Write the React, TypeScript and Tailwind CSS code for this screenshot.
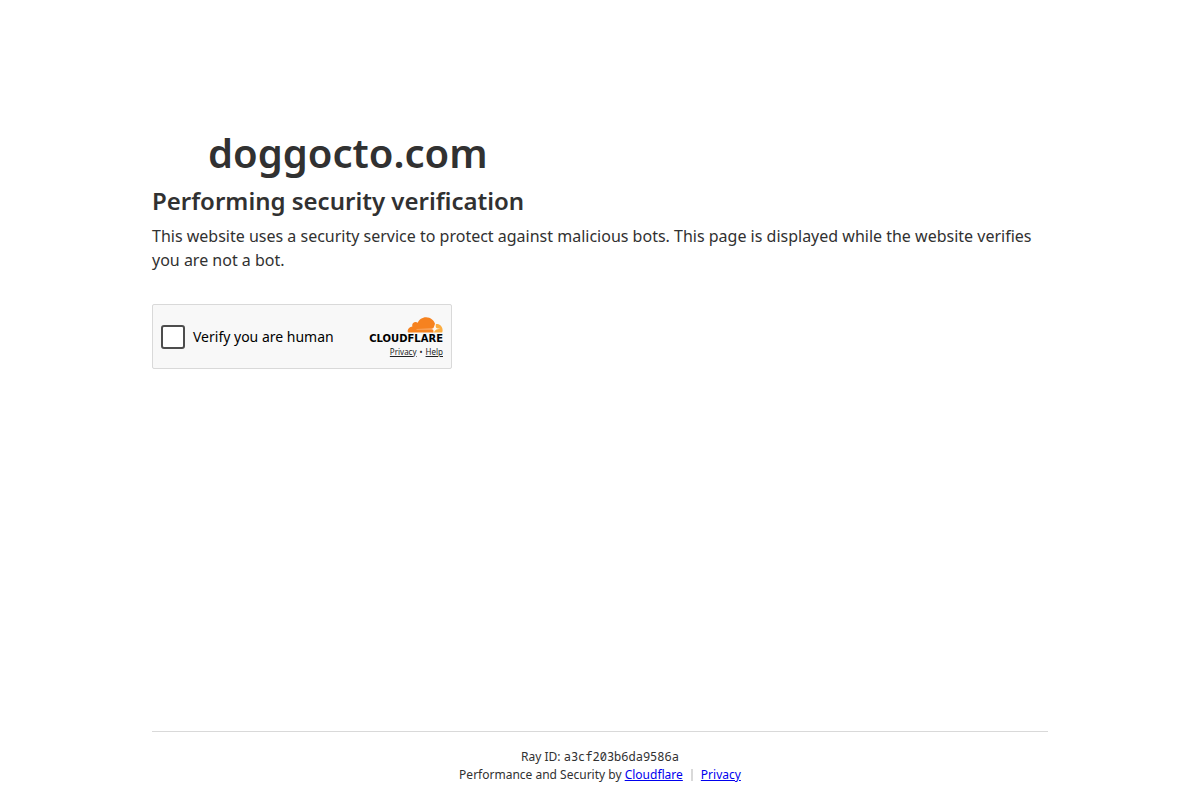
function CloudMark() {
  return (
    <svg className="h-4 w-9" viewBox="0 0 36 16" aria-hidden="true">
      <path
        fill="#fbad41"
        d="M28.8 7.100c.3-.1.6-.1.900-.1 3.300 0 5.900 2.700 5.900 6 0 .9-.1 1.600-.3 2.300-.1.200-.2.300-.4.300H25.300l1.700-3.600z"
      />
      <path
        fill="#f6821f"
        d="M1.200 15.600c-.3 0-.4-.2-.4-.5 0-.2-.1-.5-.1-.8 0-2.600 2.100-4.700 4.700-4.800-.1-.4-.2-.8-.2-1.200 0-1.900 1.500-3.400 3.400-3.400.8 0 1.600.3 2.200.8C12.100 2.600 15.300.3 19 .3c4.600 0 8.500 3.300 9.300 7.600l-1.500 4.200c-.1 1.100-.1 2-.5 3.200-.1.2-.2.3-.4.3z"
      />
      <path
        fill="#fff"
        fillOpacity="0.9"
        d="M9.500 11.900l15-.2c1.200-.1 2-.7 2.400-1.700l1-3 .7 0 .2 2.700c.2 1 .9 1.500 2 1.700l2.400.4-2.600.4c-1.700.3-2.900 1.200-3.400 2.800l-.2.600h-.6l.1-1.300c.1-1.200-.6-1.900-1.900-2l-15.100-.1z"
      />
    </svg>
  );
}

export default function App() {
  return (
    <div className="flex min-h-screen flex-col bg-white font-['Noto_Sans',sans-serif] text-[#313131]">
      <main className="mx-auto w-full max-w-[960px] grow px-8 pt-[123px]">
        <h1 className="pl-14 text-[40px] leading-[60px] font-semibold">doggocto.com</h1>
        <h2 className="text-2xl leading-9 font-semibold">Performing security verification</h2>
        <p className="mt-[5px] text-base leading-6">
          This website uses a security service to protect against malicious bots. This page is
          displayed while the website verifies you are not a bot.
        </p>
        <div className="mt-8 flex h-[65px] w-[300px] items-center justify-between rounded-[2px] border border-[#d9d9d9] bg-[#f8f8f8] px-2 text-black">
          <label className="flex items-center gap-2 text-sm">
            <input
              type="checkbox"
              className="size-6 appearance-none rounded-[3px] border-2 border-[#4d4d4d] bg-white"
            />
            Verify you are human
          </label>
          <div className="flex flex-col items-end pt-[2px]">
            <CloudMark />
            <span className="font-['DejaVu_Sans',sans-serif] text-[10px] leading-3 font-bold">
              CLOUDFLARE
            </span>
            <div className="flex items-center gap-[3px] text-[8px] leading-[14px] text-[#232323]">
              <a href="#privacy" className="underline">Privacy</a>
              <span>•</span>
              <a href="#help" className="underline">Help</a>
            </div>
          </div>
        </div>
      </main>
      <footer className="mx-auto w-full max-w-[960px] px-8">
        <div className="border-t border-[#d9d9d9] py-4 text-center text-xs leading-[18px]">
          <div>
            Ray ID: <code className="font-['Noto_Sans_Mono',monospace]">a3cf203b6da9586a</code>
          </div>
          <div className="flex items-center justify-center">
            <span>
              Performance and Security by{" "}
              <a href="#cloudflare" className="text-[#0000ee] underline">Cloudflare</a>
            </span>
            <span className="mx-2 h-3 w-[2px] bg-[#d9d9d9]" />
            <a href="#privacy-policy" className="text-[#0000ee] underline">Privacy</a>
          </div>
        </div>
      </footer>
    </div>
  );
}
